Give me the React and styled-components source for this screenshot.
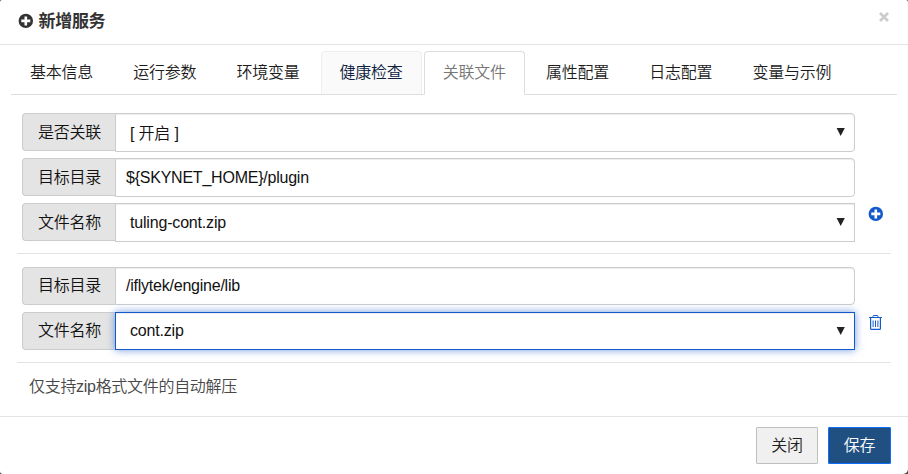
import React from "react";
import styled, { createGlobalStyle, css } from "styled-components";

const GlobalStyle = createGlobalStyle`
  * { box-sizing: border-box; }
  body {
    margin: 0;
    background: #4a4a4a;
    font-family: "Liberation Sans", "Noto Sans CJK SC", sans-serif;
    font-size: 16px;
    font-weight: 350;
    line-height: 20px;
    color: #111;
    overflow: hidden;
  }
`;

const Dialog = styled.div`
  width: 908px;
  height: 474px;
  background: #fff;
  border-radius: 2px 2px 5px 3px;
  display: flex;
  flex-direction: column;
`;

const Header = styled.header`
  flex: none;
  height: 45px;
  padding: 0 18px;
  border-bottom: 1px solid #e3e3e3;
  display: flex;
  align-items: flex-start;
`;

const HeaderIcon = styled.span`
  display: flex;
  margin-top: 13px;
`;

const Title = styled.h4`
  margin: 12px 0 0 4.5px;
  font-size: 17px;
  line-height: 20px;
  font-weight: 700;
  letter-spacing: -0.3px;
  color: #333;
`;

const CloseButton = styled.button`
  margin: 12px 1px 0 auto;
  padding: 0;
  border: 0;
  background: none;
  display: flex;
`;

const Tabs = styled.nav`
  flex: none;
  display: flex;
  height: 44px;
  margin: 6px 11px 0;
  border-bottom: 1px solid #ddd;
`;

const Tab = styled.a`
  height: 44px;
  padding: 11px 18px 0;
  margin-right: 2.2px;
  border: 1px solid transparent;
  border-radius: 4px 4px 0 0;
  letter-spacing: -0.25px;
  color: #1c1c1c;
  white-space: nowrap;
  ${(p) =>
    p.$state === "hover" &&
    css`
      height: 43px;
      background: #fafafa;
      border-color: #eee;
      border-bottom: 0;
      color: #0d213f;
    `}
  ${(p) =>
    p.$state === "active" &&
    css`
      background: #fff;
      border-color: #ddd;
      border-bottom-color: #fff;
      color: #777;
    `}
`;

const Group = styled.section`
  flex: none;
  display: flex;
  height: ${(p) => p.$height}px;
  margin: 0 17px;
  padding: ${(p) => p.$top}px 0 0 5px;
  border-bottom: 1px solid #e3e3e3;
`;

const Rows = styled.div`
  width: 833px;
  display: grid;
  grid-auto-rows: 38px;
  row-gap: 7px;
`;

const Row = styled.div`
  display: flex;
  align-items: flex-start;
`;

const Label = styled.label`
  width: 93px;
  height: 38px;
  flex: none;
  padding: ${(p) => p.$drop || 8}px 0 0 15px;
  border: 1px solid #ccc;
  border-right: 0;
  border-radius: 4px 0 0 4px;
  background: #e4e4e4;
  letter-spacing: -0.25px;
  white-space: nowrap;
`;

const Field = styled.div`
  flex: 1;
  height: ${(p) => p.$height || 39}px;
  display: flex;
  justify-content: space-between;
  padding: ${(p) => p.$drop || 8}px 9px 0 ${(p) => (p.$select ? 14 : 10)}px;
  border: 1px solid #ccc;
  border-radius: ${(p) => (p.$square ? "0" : "0 4px 4px 0")};
  background: #fff;
  box-shadow: inset 0 1px 1px rgba(0, 0, 0, 0.075);
  letter-spacing: ${(p) => (p.$select ? -0.18 : -0.23)}px;
  white-space: pre;
  ${(p) =>
    p.$focus &&
    css`
      border-color: #1259cb;
      box-shadow: inset 0 1px 1px rgba(0, 0, 0, 0.075), 0 0 8px rgba(18, 89, 203, 0.6);
    `}
`;

const Arrow = styled.svg`
  flex: none;
  margin-top: ${(p) => p.$top}px;
`;

const Action = styled.button`
  margin: ${(p) => p.$top}px 0 0 13px;
  padding: 0;
  border: 0;
  background: none;
  height: 16px;
  display: flex;
`;

const Note = styled.p`
  flex: 1;
  margin: 0;
  padding: 14px 29px 0;
  letter-spacing: -0.3px;
  color: #484848;
`;

const Footer = styled.footer`
  flex: none;
  height: 58px;
  padding: 10px 17px 0;
  border-top: 1px solid #e3e3e3;
  display: flex;
  justify-content: flex-end;
  gap: 10px;
`;

const Button = styled.button`
  width: ${(p) => (p.$primary ? 63 : 62)}px;
  height: 37px;
  padding: 0;
  border: 1px solid ${(p) => (p.$primary ? "#0d6efd" : "#bfbfbf")};
  border-radius: 1px;
  background: ${(p) => (p.$primary ? "#205081" : "#f0f0f0")};
  color: ${(p) => (p.$primary ? "#fff" : "#222")};
  font: inherit;
  letter-spacing: -0.25px;
`;

const PlusCircle = ({ color }) => (
  <svg width="16" height="16" viewBox="0 0 16 16">
    <circle cx="7.8" cy="7.9" r="7.2" fill={color} />
    <path d="M7.8 3.4v9M3.3 7.9h9" stroke="#fff" strokeWidth="2.6" />
  </svg>
);

const Trash = () => (
  <svg width="15" height="15" viewBox="0 0 15 15" fill="none" stroke="#1259cb">
    <path d="M1 2.5h13M5 2.5V1.5q0-1 1-1h3q1 0 1 1v1" />
    <path d="M2.6 2.5v11q0 0.9 0.9 0.9h8q0.9 0 0.9-0.9v-11" strokeWidth="1.2" />
    <path d="M5.1 5.5v6.5M7.5 5.5v6.5M9.9 5.5v6.5" />
  </svg>
);

const Caret = ({ top }) => (
  <Arrow $top={top} width="9" height="8" viewBox="0 0 9 8">
    <path d="M0.6 0h8.2L4.7 7.9z" fill="#222" />
  </Arrow>
);

const tabs = ["基本信息", "运行参数", "环境变量", "健康检查", "关联文件", "属性配置", "日志配置", "变量与示例"];
const tabState = { 健康检查: "hover", 关联文件: "active" };

export default function App() {
  return (
    <>
      <GlobalStyle />
      <Dialog>
        <Header>
          <HeaderIcon><PlusCircle color="#333" /></HeaderIcon>
          <Title>新增服务</Title>
          <CloseButton aria-label="关闭">
            <svg width="10" height="10" viewBox="0 0 10 10">
              <path d="M1 1l8 8M9 1l-8 8" stroke="#ccc" strokeWidth="2.6" />
            </svg>
          </CloseButton>
        </Header>
        <Tabs>
          {tabs.map((name) => (
            <Tab key={name} $state={tabState[name]}>{name}</Tab>
          ))}
        </Tabs>
        <Group $height={159} $top={18}>
          <Rows>
            <Row>
              <Label $drop={9}>是否关联</Label>
              <Field $select $drop={10}>[ 开启 ]<Caret top={4} /></Field>
            </Row>
            <Row>
              <Label $drop={9}>目标目录</Label>
              <Field $drop={9}>{"${SKYNET_HOME}/plugin"}</Field>
            </Row>
            <Row>
              <Label $drop={9}>文件名称</Label>
              <Field $select $square $drop={9}>tuling-cont.zip<Caret top={5} /></Field>
            </Row>
          </Rows>
          <Action $top={93} aria-label="新增"><PlusCircle color="#1259cb" /></Action>
        </Group>
        <Group $height={109} $top={13}>
          <Rows>
            <Row>
              <Label>目标目录</Label>
              <Field $height={38}>/iflytek/engine/lib</Field>
            </Row>
            <Row>
              <Label>文件名称</Label>
              <Field $select $square $focus $height={38}>cont.zip<Caret top={6} /></Field>
            </Row>
          </Rows>
          <Action $top={48} aria-label="删除"><Trash /></Action>
        </Group>
        <Note>仅支持zip格式文件的自动解压</Note>
        <Footer>
          <Button>关闭</Button>
          <Button $primary>保存</Button>
        </Footer>
      </Dialog>
    </>
  );
}
